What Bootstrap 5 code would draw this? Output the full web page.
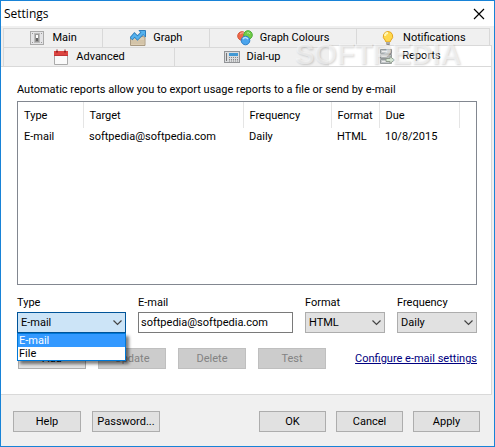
<!DOCTYPE html>
<html lang="en">
<head>
<meta charset="utf-8">
<meta name="viewport" content="width=device-width, initial-scale=1">
<title>Settings</title>
<link href="https://cdn.jsdelivr.net/npm/bootstrap@5.3.0/dist/css/bootstrap.min.css" rel="stylesheet">
<style>
body { font-family: Roboto, sans-serif; font-size: 11px; line-height: 14px; color: #000; }
.win { min-height: 100vh; background: #f0f0f0; border: 1px solid #1883d7; }
.titlebar { height: 25px; background: #fff; padding: 0 9px 0 3px; }
.titlebar h1 { font: 12px/24px "Open Sans", sans-serif; }
.close-btn { width: 12px; height: 12px; }
.tabs { padding: 2px 4px 0 2px; }
.tab-row { display: grid; height: 19px; }
.row-one { grid-template-columns: 99fr 107fr 146fr 134fr; }
.row-two { grid-template-columns: 171fr 155fr 161fr; }
.tab { border: 1px solid #d9d9d9; border-width: 1px 0 0 1px; background: #f0f0f0; padding: 0; color: #000; display: flex; align-items: center; justify-content: center; gap: 7px; min-width: 0; white-space: nowrap; }
.tab:last-child { border-right-width: 1px; }
.tab svg { width: 16px; height: 16px; flex: none; }
.tab.current { background: #fff; border-left: 0; margin: -2px -2px 0 0; z-index: 1; }
.page { background: #fff; border: 1px solid #d9d9d9; border-left: 0; margin-right: 2px; padding: 16px 14px 25px 16px; }
.list-box { border: 1px solid #828790; height: 184px; margin-top: 4px; }
.list-box table { width: 441px; table-layout: fixed; }
.list-box th, .list-box td { font-weight: 400; padding: 0 6px; white-space: nowrap; }
.list-box th { height: 26px; border-right: 1px solid #e5e5e5; border-top: 1px solid #fff; border-bottom: 1px solid #fff; }
.list-box td { height: 16px; }
.fields { display: grid; grid-template-columns: 109px 1fr 80px 80px; gap: 12px; margin-top: 11px; }
.fields label { display: block; margin-bottom: 2px; }
.ctl { display: block; width: 100%; height: 21px; border: 1px solid #adadad; border-radius: 0; font-size: 11px; line-height: 14px; padding: 0 3px; color: #000; background-color: #e1e1e1; }
.ctl.entry { border-color: #7a7a7a; background: #fff; padding: 0 2px; }
.ctl.opened { border-color: #005499; background-color: #cce4f7; }
select.ctl { appearance: none; }
.chev { position: absolute; right: 4px; top: 7px; width: 9px; height: 7px; pointer-events: none; }
.options { position: absolute; top: 100%; left: 0; right: 0; z-index: 5; background: #fff; border: 1px solid #0078d7; box-shadow: 3px 3px 3px rgba(0,0,0,.5); line-height: 13px; }
.options li { padding: 0 1px; }
.options .chosen { background: #3399ff; color: #fff; }
.push { width: 68px; height: 21px; padding: 0; border: 1px solid #adadad; background: #e1e1e1; color: #000; font-size: 11px; line-height: 14px; }
.push:disabled { background: #ccc; border-color: #bfbfbf; color: #838383; }
.actions { margin-top: 15px; padding-left: 1px; gap: 12px; }
.actions a { color: #000080; }
.foot { padding: 16px 14px 14px 12px; }
.foot-left { gap: 11px; }
.foot-right { gap: 10px; }
.foot-right .push { width: 67px; }
.stamp { position: absolute; right: 33px; top: 36px; z-index: 3; font: bold 29px/34px "Liberation Sans", sans-serif; color: rgba(255,255,255,.5); text-shadow: 1px 1px 2px rgba(0,0,0,.16); pointer-events: none; }
</style>
</head>
<body>
<main class="win d-flex flex-column position-relative">
  <header class="titlebar d-flex align-items-center justify-content-between">
    <h1 class="m-0">Settings</h1>
    <button class="close-btn p-0 border-0 bg-transparent d-flex" type="button" aria-label="Close"><svg width="12" height="12" viewBox="0 0 12 12" fill="none" stroke="#000" stroke-width="1.2"><path d="M1 1l10 10M11 1L1 11"/></svg></button>
  </header>
  <nav class="tabs">
    <div class="tab-row row-one">
      <button class="tab" type="button"><svg viewBox="0 0 16 16"><rect x="1.5" y="1.5" width="13" height="13" fill="#e4e4e6" stroke="#aaa"/><rect x="5.5" y="3.500" width="5" height="9" fill="#999" stroke="#bbb"/><path d="M7 5h2v6H7z" fill="#fff"/><path d="M7 8h2v3H7z" fill="#666"/><path d="M3 3h1v1H3zM12 3h1v1h-1zM3 12h1v1H3zM12 12h1v1h-1z" fill="#999"/></svg>Main</button>
      <button class="tab" type="button"><svg viewBox="0 0 16 16"><path d="M.5 8.500L4 6l3 3 3-3 5 1v8.500H.5z" fill="#dccdb2" stroke="#a99a82"/><path d="M1 11h14M1 13h14" stroke="#cbbb9f"/><path d="M1 9l3.500-4 3 3L13 2.500" fill="none" stroke="#2f7fbd" stroke-width="4"/><path d="M9 .5h6.500V7z" fill="#55b2ee" stroke="#2f7fbd"/><path d="M1.500 8.500l3-3.500 3 3L13 2.500" fill="none" stroke="#55b2ee" stroke-width="2.400"/></svg>Graph</button>
      <button class="tab" type="button"><svg viewBox="0 0 16 16"><circle cx="5" cy="6" r="4.300" fill="#ee6848" stroke="#d5583c"/><circle cx="11" cy="5" r="4.300" fill="#72cc48" stroke="#4dac39"/><circle cx="8.500" cy="10.500" r="4.300" fill="#4ca5ed" stroke="#2b7fca"/><path d="M6 9q2-3 5 0" stroke="#b8e5ff" stroke-width="1.500" fill="none"/><path d="M3 4q2-2 4-1M10 3q2-1 3 1" stroke="#fff" stroke-opacity=".5" fill="none"/></svg>Graph Colours</button>
      <button class="tab" type="button"><svg viewBox="0 0 16 16"><path d="M8 1.500a4.800 4.800 0 0 0-3 8.500l1 2h4l1-2a4.800 4.800 0 0 0-3-8.500z" fill="#ffd84c" stroke="#e4a521"/><path d="M5 6q0-3 3-3" fill="none" stroke="#fff7b5" stroke-width="2"/><path d="M6 12h4v2l-1 1.500H7L6 14z" fill="#888"/><path d="M6 13h4" stroke="#ccc"/></svg>Notifications</button>
    </div>
    <div class="tab-row row-two">
      <button class="tab" type="button"><svg viewBox="0 0 16 16"><path d="M1.500 3.500h13v12h-13z" fill="#fafafa" stroke="#aaa"/><path d="M1 2h14v5H1z" fill="#dc4541"/><path d="M1 6.500h14" stroke="#c03538"/><path d="M4 .5v3M12 .5v3" stroke="#9d2023" stroke-width="2"/><path d="M4 0v2M12 0v2" stroke="#eee"/></svg>Advanced</button>
      <button class="tab" type="button"><svg viewBox="0 0 16 16"><rect x=".5" y="2.500" width="15" height="11" fill="#dadcde" stroke="#929497"/><path d="M2.500 4v8" stroke="#777"/><path d="M5 4h9v3H5z" fill="#4299d4"/><path d="M5 8.500h9M5 10.500h9M5 12h9" stroke="#888" stroke-dasharray="1 1"/></svg>Dial-up</button>
      <button class="tab current" type="button" aria-current="page"><svg viewBox="0 0 16 16"><path d="M1.500 1.500h11v4h-11zM1.500 6.500h11v4h-11zM1.500 11.500h11v4h-11z" fill="#c4c8ca" stroke="#989d9f"/><path d="M3 3.500h5M3 8.500h5M3 13.500h5" stroke="#eee"/><path d="M7 10.500h4v-2l4.500 3.500-4.500 3.500v-2H7z" fill="#d6e5d3" stroke="#929d90"/></svg>Reports</button>
    </div>
  </nav>
  <section class="page">
    <div>Automatic reports allow you to export usage reports to a file or send by e-mail</div>
    <div class="list-box">
      <table>
        <colgroup><col style="width:65px"><col style="width:160px"><col style="width:88px"><col style="width:48px"><col style="width:80px"></colgroup>
        <thead><tr><th>Type</th><th>Target</th><th>Frequency</th><th>Format</th><th>Due</th></tr></thead>
        <tbody><tr><td>E-mail</td><td>softpedia@softpedia.com</td><td>Daily</td><td>HTML</td><td>10/8/2015</td></tr></tbody>
      </table>
    </div>
    <div class="fields">
      <div><label for="type">Type</label>
        <div class="position-relative"><select id="type" class="ctl opened"><option>E-mail</option><option>File</option></select><svg class="chev" viewBox="0 0 9 7" fill="none" stroke="#444" stroke-width="1.200"><path d="M.5 1.500l4 4 4-4"/></svg>
          <ul class="options list-unstyled m-0"><li class="chosen">E-mail</li><li>File</li></ul></div></div>
      <div><label for="mail">E-mail</label><input id="mail" class="ctl entry" type="text" value="softpedia@softpedia.com"></div>
      <div><label for="format">Format</label>
        <div class="position-relative"><select id="format" class="ctl"><option>HTML</option></select><svg class="chev" viewBox="0 0 9 7" fill="none" stroke="#444" stroke-width="1.200"><path d="M.5 1.500l4 4 4-4"/></svg></div></div>
      <div><label for="freq">Frequency</label>
        <div class="position-relative"><select id="freq" class="ctl"><option>Daily</option></select><svg class="chev" viewBox="0 0 9 7" fill="none" stroke="#444" stroke-width="1.200"><path d="M.5 1.500l4 4 4-4"/></svg></div></div>
    </div>
    <div class="actions d-flex align-items-center">
      <button class="push" type="button">Add</button><button class="push" type="button" disabled>Update</button><button class="push" type="button" disabled>Delete</button><button class="push" type="button" disabled>Test</button>
      <a class="ms-auto text-nowrap" href="#">Configure e-mail settings</a>
    </div>
  </section>
  <footer class="foot d-flex justify-content-between">
    <div class="foot-left d-flex"><button class="push" type="button">Help</button><button class="push" type="button">Password...</button></div>
    <div class="foot-right d-flex"><button class="push" type="button">OK</button><button class="push" type="button">Cancel</button><button class="push" type="button">Apply</button></div>
  </footer>
  <div class="stamp">SOFTPEDIA</div>
</main>
<script src="https://cdn.jsdelivr.net/npm/bootstrap@5.3.0/dist/js/bootstrap.bundle.min.js"></script>
</body>
</html>
